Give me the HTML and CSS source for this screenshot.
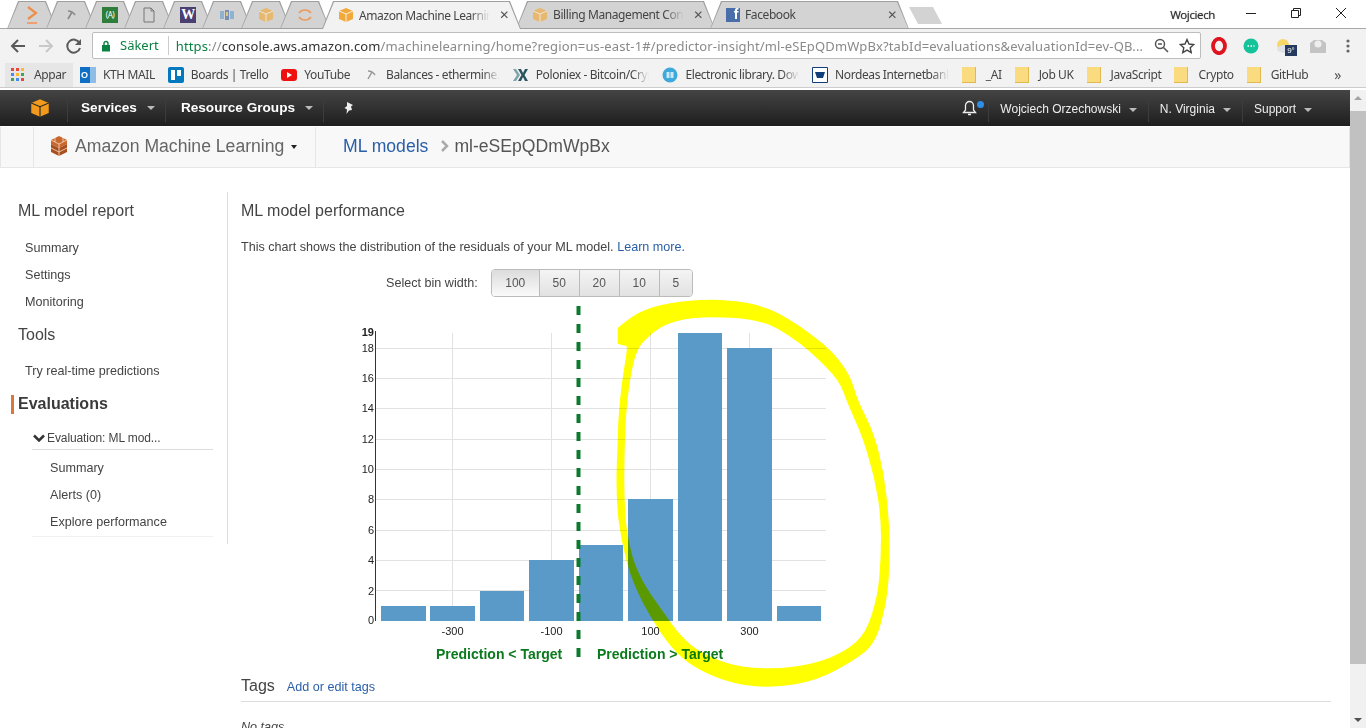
FILE: index.html
```html
<!DOCTYPE html>
<html lang="en">
    <head>
        <meta charset="UTF-8">
        <meta name="viewport" content="width=device-width, initial-scale=1.0">
        <title>Amazon Machine Learning</title>
        <link rel="stylesheet" href="styles.css">
    </head>

    <body>
        <!-- browser tabs -->
        <div class="tabstrip">
            <div class="tab tab-small first">
                <svg width="16" height="22" viewBox="0 0 16 22"><path d="M4 3l8 6-8 6" fill="none" stroke="#ee8e4a" stroke-width="2.2"/><path d="M3 19h10" stroke="#f0a070" stroke-width="2"/></svg>
            </div>
            <div class="tab tab-small">
                <svg width="14" height="14" viewBox="0 0 14 14"><path d="M4 3c3 0 5 1 7 4M8 4l-4 7" fill="none" stroke="#888" stroke-width="1.6"/></svg>
            </div>
            <div class="tab tab-small">
                <span class="fav fav-green">(A)</span>
            </div>
            <div class="tab tab-small">
                <svg width="14" height="16" viewBox="0 0 14 16"><path d="M2 1h7l3 3v11H2zM9 1v3h3" fill="none" stroke="#777"/></svg>
            </div>
            <div class="tab tab-small">
                <span class="fav fav-purple">W</span>
            </div>
            <div class="tab tab-small">
                <svg width="16" height="14" viewBox="0 0 16 14"><path d="M1 3h4v8H1zM11 3h4v8h-4z" fill="#8fb2cf"/><path d="M6 2h4v10H6z" fill="#7a8fb0"/><path d="M7 4h2v4H7z" fill="#d9c98a"/></svg>
            </div>
            <div class="tab tab-small">
                <svg class="faded" width="16" height="16" viewBox="0 0 16 16"><use href="#cube"/></svg>
            </div>
            <div class="tab tab-small">
                <svg width="16" height="16" viewBox="0 0 16 16"><path d="M2 6c3-4 9-4 12 0M2 10c3 4 9 4 12 0" fill="none" stroke="#ee9a5a" stroke-width="1.6"/></svg>
            </div>
            <div class="tab tab-big active">
                <svg width="16" height="16" viewBox="0 0 16 16"><use href="#cube"/></svg>
                <span class="tab-title">Amazon Machine Learning</span>
                <span class="tab-close">&#10005;</span>
            </div>
            <div class="tab tab-big">
                <svg class="faded" width="16" height="16" viewBox="0 0 16 16"><use href="#cube"/></svg>
                <span class="tab-title">Billing Management Console</span>
                <span class="tab-close">&#10005;</span>
            </div>
            <div class="tab tab-big">
                <span class="fav fav-fb">f</span>
                <span class="tab-title">Facebook</span>
                <span class="tab-close">&#10005;</span>
            </div>
            <div class="newtab"></div>
            <span class="win-user">Wojciech</span>
            <div class="win-controls">
                <svg width="12" height="12" viewBox="0 0 12 12"><path d="M1 6.500h10" stroke="#222"/></svg>
                <svg width="12" height="12" viewBox="0 0 12 12"><path d="M1.500 3.500h7v7h-7zM3.500 3.500v-2h7v7h-2" fill="none" stroke="#222"/></svg>
                <svg width="12" height="12" viewBox="0 0 12 12"><path d="M1 1l10 10M11 1L1 11" stroke="#222"/></svg>
            </div>
        </div>

        <!-- shared cube shape -->
        <svg class="defs" width="0" height="0">
            <symbol id="cube" viewBox="0 0 16 16">
                <path d="M1 4l7-3 7 3v8l-7 3-7-3z" fill="#f2a93b"/>
                <path d="M1 4l7 3 7-3" fill="none" stroke="#fff" stroke-width=".8"/>
                <path d="M8 7v8" stroke="#fff" stroke-width=".8"/>
            </symbol>
        </svg>

        <!-- address bar -->
        <div class="toolbar">
            <div class="nav-buttons">
                <svg width="18" height="18" viewBox="0 0 18 18"><path d="M16 9H3M9 3L3 9l6 6" fill="none" stroke="#5a5a5a" stroke-width="2"/></svg>
                <svg width="18" height="18" viewBox="0 0 18 18"><path d="M2 9h13M9 3l6 6-6 6" fill="none" stroke="#c8c8c8" stroke-width="2"/></svg>
                <svg width="18" height="18" viewBox="0 0 18 18"><path d="M14.500 6A6.500 6.500 0 1 0 15 11" fill="none" stroke="#5a5a5a" stroke-width="2"/><path d="M16 2v6h-6z" fill="#5a5a5a"/></svg>
            </div>
            <div class="address">
                <svg class="addr-lock" width="10" height="12" viewBox="0 0 10 12"><path d="M1 5h8v6.500H1z" fill="#0b8043"/><path d="M3 5V3.500a2 2 0 0 1 4 0V5" fill="none" stroke="#0b8043" stroke-width="1.400"/></svg>
                <span class="secure">Säkert</span>
                <span class="url"><span class="url-green">https</span>://<span class="url-dark">console.aws.amazon.com</span>/machinelearning/home?region=us-east-1#/predictor-insight/ml-eSEpQDmWpBx?tabId=evaluations&amp;evaluationId=ev-QB...</span>
                <svg class="addr-zoom" width="15" height="15" viewBox="0 0 15 15"><circle cx="6" cy="6" r="4.500" fill="none" stroke="#555" stroke-width="1.500"/><path d="M9.500 9.500L14 14M4 6h4" stroke="#555" stroke-width="1.500"/></svg>
                <svg class="addr-star" width="16" height="16" viewBox="0 0 16 16"><path d="M8 1.500l2 4.500 4.800.5-3.600 3.200 1 4.800L8 12.100l-4.200 2.400 1-4.800L1.200 6.500 6 6z" fill="none" stroke="#444" stroke-width="1.400"/></svg>
            </div>
            <div class="extensions">
                <svg width="18" height="18" viewBox="0 0 18 18"><ellipse cx="9" cy="9" rx="6" ry="7.200" fill="none" stroke="#e0141e" stroke-width="3.800"/></svg>
                <svg width="16" height="16" viewBox="0 0 16 16"><circle cx="8" cy="8" r="7.500" fill="#15c39a"/><path d="M4.500 8h7" stroke="#fff" stroke-dasharray="1.500 1.500" stroke-width="1.500"/></svg>
                <span class="weather">
                    <svg width="20" height="16" viewBox="0 0 20 16"><circle cx="9" cy="7" r="6" fill="#f7d768"/><ellipse cx="11" cy="11" rx="8" ry="4" fill="#dfe3e8"/></svg>
                    <span class="weather-badge">9°</span>
                </span>
                <svg width="18" height="16" viewBox="0 0 18 16"><path d="M1 5l4-3h8l4 3v10H1z" fill="#c4c4c4"/><circle cx="9" cy="6" r="3.500" fill="#eee"/></svg>
                <svg class="menu-dots" width="4" height="14" viewBox="0 0 4 14"><circle cx="2" cy="2" r="1.600"/><circle cx="2" cy="7" r="1.600"/><circle cx="2" cy="12" r="1.600"/></svg>
            </div>
        </div>

        <!-- bookmarks -->
        <div class="bookmarks">
            <div class="bm bm-apps">
                <svg width="14" height="14" viewBox="0 0 14 14"><g><path d="M0 0h3v3H0z" fill="#e8453c"/><path d="M5 0h3v3H5z" fill="#e8453c"/><path d="M10 0h3v3h-3z" fill="#f9bb2d"/><path d="M0 5h3v3H0z" fill="#4a8af4"/><path d="M5 5h3v3H5z" fill="#f9bb2d"/><path d="M10 5h3v3h-3z" fill="#3aa757"/><path d="M0 10h3v3H0z" fill="#3aa757"/><path d="M5 10h3v3H5z" fill="#4a8af4"/><path d="M10 10h3v3h-3z" fill="#e8453c"/></g></svg>
                <span>Appar</span>
            </div>
            <div class="bm">
                <span class="fav fav-outlook">O</span>
                <span>KTH MAIL</span>
            </div>
            <div class="bm">
                <svg width="16" height="16" viewBox="0 0 16 16"><rect width="16" height="16" rx="2" fill="#0079bf"/><path d="M3 3h4v10H3zM9 3h4v6H9z" fill="#fff"/></svg>
                <span>Boards | Trello</span>
            </div>
            <div class="bm">
                <svg width="16" height="12" viewBox="0 0 16 12"><rect width="16" height="12" rx="3" fill="#ee0f0f"/><path d="M6 3l5 3-5 3z" fill="#fff"/></svg>
                <span>YouTube</span>
            </div>
            <div class="bm">
                <svg width="16" height="14" viewBox="0 0 14 14"><path d="M4 3c3 0 5 1 7 4M8 4l-4 7" fill="none" stroke="#999" stroke-width="1.500"/></svg>
                <span class="bm-cut">Balances - ethermine.org</span>
            </div>
            <div class="bm">
                <svg width="16" height="14" viewBox="0 0 16 14"><path d="M0 1h3l4 6-4 6H0l4-6z" fill="#7fa3ad"/><path d="M5 1h3l2 4 2-4h3l-3.500 6 3.500 6h-3l-2-4-2 4H5l3.500-6z" fill="#27565f"/></svg>
                <span class="bm-cut">Poloniex - Bitcoin/Crypto</span>
            </div>
            <div class="bm">
                <svg width="16" height="16" viewBox="0 0 16 16"><circle cx="8" cy="8" r="7.500" fill="#3fa9dc"/><path d="M4.500 5h3v6h-3zM8.500 5h3v6h-3z" fill="#cde9f6"/></svg>
                <span class="bm-cut">Electronic library. Download</span>
            </div>
            <div class="bm">
                <svg width="16" height="16" viewBox="0 0 16 16"><path d="M.5.500h15v15H.500z" fill="#fff" stroke="#0f3f7a"/><path d="M3 5h10l-2 6H5z" fill="#0f3f7a"/></svg>
                <span class="bm-cut">Nordeas Internetbank</span>
            </div>
            <div class="bm"><i class="folder"></i><span>_AI</span></div>
            <div class="bm"><i class="folder"></i><span>Job UK</span></div>
            <div class="bm"><i class="folder"></i><span>JavaScript</span></div>
            <div class="bm"><i class="folder"></i><span>Crypto</span></div>
            <div class="bm"><i class="folder"></i><span>GitHub</span></div>
            <span class="bm-more">»</span>
        </div>

        <div class="viewport">
            <div class="page">
                <!-- console header -->
                <header class="aws-nav">
                    <div class="aws-logo">
                        <svg width="20" height="20" viewBox="0 0 16 16"><path d="M1 4l7-3 7 3v8l-7 3-7-3z" fill="#f29a1c"/><path d="M1 4l7 3 7-3" fill="none" stroke="#2a2a2a" stroke-width=".9"/><path d="M8 7v8" stroke="#2a2a2a" stroke-width=".9"/></svg>
                    </div>
                    <div class="aws-item aws-bold">Services <i class="caret"></i></div>
                    <div class="aws-item aws-bold aws-groups">Resource Groups <i class="caret"></i></div>
                    <div class="aws-item aws-pin">
                        <svg width="12" height="14" viewBox="0 0 12 14"><path d="M4 1l6 3-2 1.500 1 3.500-3 .5L3.500 13 4 8.500 1.500 7 4 5z" fill="#eee"/></svg>
                    </div>
                    <div class="aws-right">
                        <div class="aws-item aws-bell">
                            <svg width="15" height="16" viewBox="0 0 15 16"><path d="M7.500 1.500a4 4 0 0 1 4 4V10l2 2.500h-12l2-2.500V5.500a4 4 0 0 1 4-4zM6 14.500h3" fill="none" stroke="#eee" stroke-width="1.300"/></svg>
                            <i class="bell-dot"></i>
                        </div>
                        <div class="aws-item">Wojciech Orzechowski <i class="caret"></i></div>
                        <div class="aws-item">N. Virginia <i class="caret"></i></div>
                        <div class="aws-item">Support <i class="caret"></i></div>
                    </div>
                </header>

                <!-- breadcrumb row -->
                <div class="subbar">
                    <div class="sub-service">
                        <svg width="18" height="22" viewBox="0 0 18 22"><path d="M9 1l8 4v4l-8 4-8-4V5z" fill="#c9682c"/><path d="M1 9l8 4 8-4v8l-8 4-8-4z" fill="#a9501f"/><path d="M1 5l8 4 8-4M1 13l8 4 8-4M9 9v12M5 3v4M13 3v4" fill="none" stroke="#f5ddcb" stroke-width=".8"/></svg>
                        <span>Amazon Machine Learning</span>
                        <i class="caret caret-dark"></i>
                    </div>
                    <div class="crumbs">
                        <a class="crumb-link">ML models</a>
                        <svg width="8" height="12" viewBox="0 0 8 12"><path d="M1 1l5 5-5 5" fill="none" stroke="#aaa" stroke-width="2.500"/></svg>
                        <span>ml-eSEpQDmWpBx</span>
                    </div>
                </div>

                <div class="content">
                    <aside class="sidebar">
                        <h4 class="side-title">ML model report</h4>
                        <ul class="side-list">
                            <li>Summary</li>
                            <li>Settings</li>
                            <li>Monitoring</li>
                        </ul>
                        <h4 class="side-title side-tools">Tools</h4>
                        <ul class="side-list side-list-tools">
                            <li>Try real-time predictions</li>
                        </ul>
                        <h4 class="side-title side-active">Evaluations</h4>
                        <div class="eval-head">
                            <svg width="12" height="8" viewBox="0 0 12 8"><path d="M1 1.500l5 5 5-5" fill="none" stroke="#333" stroke-width="2.500"/></svg>
                            <span>Evaluation: ML mod...</span>
                        </div>
                        <ul class="eval-list">
                            <li>Summary</li>
                            <li>Alerts (0)</li>
                            <li>Explore performance</li>
                        </ul>
                    </aside>

                    <main class="report">
                        <h4 class="report-title">ML model performance</h4>
                        <p class="report-text">This chart shows the distribution of the residuals of your ML model. <a class="link">Learn more.</a></p>

                        <div class="bins">
                            <span class="bins-label">Select bin width:</span>
                            <div class="bin-group">
                                <button class="bin bin-on">100</button>
                                <button class="bin">50</button>
                                <button class="bin">20</button>
                                <button class="bin">10</button>
                                <button class="bin">5</button>
                            </div>
                        </div>

                        <div class="chart">
                            <!-- viewBox is in page coordinates so values stay easy to read -->
                            <svg class="chart-svg" width="500" height="364" viewBox="350 301 500 364">
                                <g class="grid">
                                    <path d="M375 590.500h451M375 560.500h451M375 530.500h451M375 499.500h451M375 469.500h451M375 439.500h451M375 408.500h451M375 378.500h451M375 348.500h451"/>
                                    <path d="M452.500 333v288M551.500 333v288M650.500 333v288M749.500 333v288"/>
                                </g>
                                <path class="axis" d="M375.500 331v290"/>
                                <g class="bars">
                                    <rect x="381" y="606" width="45" height="15"/>
                                    <rect x="430" y="606" width="45" height="15"/>
                                    <rect x="480" y="591" width="44" height="30"/>
                                    <rect x="529" y="560" width="45" height="61"/>
                                    <rect x="579" y="545" width="44" height="76"/>
                                    <rect x="628" y="499" width="45" height="122"/>
                                    <rect x="678" y="333" width="44" height="288"/>
                                    <rect x="727" y="348" width="45" height="273"/>
                                    <rect x="777" y="606" width="44" height="15"/>
                                </g>
                                <g class="ticks">
                                    <text x="374" y="336" class="tick-bold">19</text>
                                    <text x="374" y="352">18</text>
                                    <text x="374" y="382">16</text>
                                    <text x="374" y="412">14</text>
                                    <text x="374" y="443">12</text>
                                    <text x="374" y="473">10</text>
                                    <text x="374" y="503">8</text>
                                    <text x="374" y="534">6</text>
                                    <text x="374" y="564">4</text>
                                    <text x="374" y="595">2</text>
                                    <text x="374" y="624">0</text>
                                </g>
                                <g class="xticks">
                                    <text x="452.500" y="635">-300</text>
                                    <text x="551.500" y="635">-100</text>
                                    <text x="650.500" y="635">100</text>
                                    <text x="749.500" y="635">300</text>
                                </g>
                                <path class="zero-line" d="M578.500 306V657"/>
                                <text class="side-label" x="436" y="659">Prediction &lt; Target</text>
                                <text class="side-label" x="597" y="659">Prediction &gt; Target</text>
                            </svg>
                            <!-- highlighter scribble over the chart -->
                            <svg class="scribble" width="300" height="400" viewBox="0 0 900 1200">
                                <path fill-rule="evenodd" d="M55 160L55 115Q100 75 140 60Q180 45 240 37Q300 30 360 32Q420 35 460 45Q500 55 530 70Q560 85 600 112Q640 140 670 165Q700 190 725 225Q750 260 760 295Q770 330 795 380Q820 430 835 490Q850 550 857 615Q865 680 866 740Q868 800 864 865Q860 930 842 995Q825 1060 792 1085Q760 1110 705 1140Q650 1170 585 1181Q520 1192 460 1186Q400 1180 350 1160Q300 1140 265 1115Q230 1090 197 1045Q165 1000 132 940Q100 880 82 815Q65 750 57 685Q50 620 52 535Q55 450 57 395Q60 340 67 285Q75 230 80 200Q85 170 80 165L75 165Z M160 125Q130 150 120 165Q110 180 102 205Q95 230 86 285Q78 340 75 395Q72 450 71 545Q70 640 77 705Q85 770 102 820Q120 870 155 920Q190 970 215 1005Q240 1040 270 1065Q300 1090 350 1110Q400 1130 460 1135Q520 1140 580 1132Q640 1125 690 1105Q740 1085 770 1057Q800 1030 817 975Q835 920 840 860Q845 800 845 740Q845 680 835 620Q825 560 807 500Q790 440 767 390Q745 340 732 305Q720 270 680 230Q640 190 605 162Q570 135 535 115Q500 95 450 87Q400 80 340 80Q280 80 235 90Q190 100 160 125Z"/>
                            </svg>
                        </div>

                        <div class="tags-head">
                            <h4 class="report-title">Tags</h4>
                            <a class="link">Add or edit tags</a>
                        </div>
                        <p class="no-tags">No tags</p>
                    </main>
                </div>
            </div>

            <div class="scrollbar">
                <i class="arrow-up"></i>
                <div class="thumb"></div>
                <i class="arrow-down"></i>
            </div>
        </div>
    </body>
</html>
```

FILE: styles.css
```css
* {
    box-sizing: border-box;
}

html,
body {
    height: 728px;
    overflow: hidden;
}

body {
    margin: 0;
    display: flex;
    flex-direction: column;
    font-family: "Liberation Sans", Arial, sans-serif;
    background-color: #fff;
    color: #444;
}

.defs {
    position: absolute;
}

/* tabs */
.tabstrip {
    display: flex;
    align-items: flex-end;
    height: 29px;
    flex: none;
    padding-left: 7px;
    border-bottom: 1px solid #a9a9a9;
    font-family: "Noto Sans", sans-serif;
    font-size: 12px;
    letter-spacing: -.4px;
}

.tab {
    position: relative;
    display: flex;
    align-items: center;
    height: 28px;
    margin-bottom: -1px;
    padding-bottom: 1px;
    flex: none;
    color: #444;
}

.tab::before,
.tab::after {
    content: "";
    position: absolute;
    clip-path: polygon(0 100%, 11px 0, calc(100% - 11px) 0, 100% 100%);
}

.tab::before {
    inset: 0;
    background-color: #9f9f9f;
}

.tab::after {
    top: 1px;
    right: 1px;
    bottom: 1px;
    left: 1px;
    background-color: #d3d3d3;
}

.tab > * {
    position: relative;
    z-index: 1;
}

.tab-small {
    width: 50px;
    margin-right: -11px;
    justify-content: center;
}

.tab-big {
    width: 199px;
    margin-right: -5px;
    padding-left: 16px;
    padding-right: 12px;
    gap: 5px;
}

.tab-small.first {
    padding-left: 0;
}

.tab.active {
    z-index: 2;
    margin-left: 3px;
    padding-bottom: 0;
}

.tab.active::after {
    bottom: 0;
    background-color: #f2f2f2;
}

.tab-title {
    flex: 1;
    min-width: 0;
    overflow: hidden;
    white-space: nowrap;
    -webkit-mask-image: linear-gradient(to right, #000 85%, transparent);
    mask-image: linear-gradient(to right, #000 85%, transparent);
}

.tab-close {
    flex: none;
    margin-left: 4px;
    font-size: 12px;
    color: #555;
    font-family: "DejaVu Sans", sans-serif;
}

.faded {
    opacity: .65;
}

.fav {
    display: flex;
    align-items: center;
    justify-content: center;
    width: 16px;
    height: 16px;
    flex: none;
    color: #fff;
}

.fav-green {
    background-color: #2f7d3a;
    font-size: 8px;
}

.fav-purple {
    background-color: #4b3f72;
    font-family: "Liberation Serif", serif;
    font-size: 14px;
    font-weight: bold;
}

.fav-fb {
    width: 14px;
    height: 14px;
    background-color: #4a6ea9;
    font-family: "Liberation Sans", sans-serif;
    font-size: 14px;
    font-weight: bold;
    align-items: flex-end;
    justify-content: flex-end;
    padding-right: 2px;
}

.fav-outlook {
    justify-content: flex-start;
    padding-left: 1px;
    background: linear-gradient(to right, #0f6fc6 60%, #8fbde6 60%);
    font-family: "Liberation Sans", sans-serif;
    font-size: 9px;
    font-weight: bold;
    letter-spacing: 0;
}

.newtab {
    width: 33px;
    height: 17px;
    margin: 0 0 4px 5px;
    background-color: #d3d3d3;
    clip-path: polygon(0 0, 24px 0, 100% 100%, 9px 100%);
}

.win-user {
    margin-left: auto;
    margin-bottom: 6px;
    color: #333;
    font-size: 11.5px;
    text-shadow: 0 0 1px #888;
}

.win-controls {
    display: flex;
    gap: 33px;
    margin: 0 19px 9px 30px;
}

/* address bar */
.toolbar {
    display: flex;
    align-items: center;
    height: 33px;
    flex: none;
    background-color: #f2f2f2;
    padding-left: 9px;
}

.nav-buttons {
    display: flex;
    gap: 10px;
    width: 83px;
    flex: none;
}

.address {
    display: flex;
    align-items: center;
    width: 1109px;
    height: 27px;
    flex: none;
    padding: 0 5px 0 8px;
    background-color: #fff;
    border: 1px solid #bdbdbd;
    border-radius: 2px;
    font-family: "Noto Sans", sans-serif;
    font-size: 13px;
    color: #8a8a8a;
}

.addr-lock {
    flex: none;
}

.secure {
    flex: none;
    margin-left: 9px;
    padding-right: 9px;
    border-right: 1px solid #ccc;
    color: #0b8043;
    line-height: 19px;
}

.url {
    margin-left: 7px;
    white-space: nowrap;
    letter-spacing: .13px;
}

.url-green {
    color: #0b8043;
}

.url-dark {
    color: #333;
}

.addr-zoom {
    flex: none;
    margin-left: auto;
}

.addr-star {
    flex: none;
    margin-left: 10px;
}

.extensions {
    display: flex;
    align-items: center;
    gap: 15px;
    margin-left: 9px;
    flex: none;
}

.weather {
    position: relative;
    display: block;
    width: 20px;
    height: 16px;
}

.weather-badge {
    position: absolute;
    top: 7px;
    left: 11px;
    width: 12px;
    height: 11px;
    background-color: #253a5e;
    color: #fff;
    font-size: 8px;
    line-height: 11px;
    text-align: center;
}

.menu-dots {
    fill: #666;
    margin-left: 4px;
}

/* bookmarks */
.bookmarks {
    display: flex;
    align-items: center;
    height: 26px;
    flex: none;
    padding-left: 5px;
    gap: 1px;
    background-color: #f2f2f2;
    border-bottom: 1px solid #ccc;
    font-family: "Noto Sans", sans-serif;
    font-size: 12px;
    letter-spacing: -.4px;
    color: #444;
}

.bm {
    display: flex;
    align-items: center;
    gap: 7px;
    height: 24px;
    padding: 0 6px;
    white-space: nowrap;
    flex: none;
}

.bm-apps {
    width: 68px;
    padding: 0 5px 0 6px;
    gap: 9px;
    background-color: #e6e6e6;
}

.bm-cut {
    display: block;
    width: 113.7px;
    overflow: hidden;
    -webkit-mask-image: linear-gradient(to right, #000 85%, transparent);
    mask-image: linear-gradient(to right, #000 85%, transparent);
}

.folder {
    display: block;
    width: 14px;
    height: 16px;
    margin-right: 3px;
    background-color: #fbdb7f;
    border-right: 1px solid #e0b94f;
    border-bottom: 1px solid #e0b94f;
}

.bm-more {
    margin-left: 19px;
    font-size: 14px;
    color: #555;
}

/* page + scrollbar */
.viewport {
    display: flex;
    flex: 1;
    min-height: 0;
    padding-top: 2px;
}

.page {
    width: 1350px;
    flex: none;
    overflow: hidden;
}

.scrollbar {
    display: flex;
    flex-direction: column;
    flex: 1;
    align-items: center;
    background-color: #f1f1f1;
}

.thumb {
    width: 100%;
    height: 553px;
    margin-top: 11px;
    background-color: #c1c1c1;
}

.arrow-up,
.arrow-down {
    display: block;
    width: 0;
    height: 0;
    border-left: 4px solid transparent;
    border-right: 4px solid transparent;
}

.arrow-up {
    margin-top: 6px;
    border-bottom: 4px solid #a3a3a3;
}

.arrow-down {
    margin-top: auto;
    margin-bottom: 6px;
    border-top: 4px solid #505050;
}

/* console header */
.aws-nav {
    display: flex;
    align-items: stretch;
    height: 36px;
    background: linear-gradient(#444, #1e1e1e);
    color: #eee;
    font-size: 12px;
}

.aws-logo {
    display: flex;
    align-items: center;
    width: 67px;
    padding-left: 30px;
}

.aws-item {
    display: flex;
    align-items: center;
    white-space: nowrap;
    padding: 1px 11px 0;
    border-left: 1px solid #3c3c3c;
    margin: 4px 0;
    gap: 8px;
}

.aws-bold {
    font-size: 13.6px;
    font-weight: bold;
    padding: 0 10px 2px 13px;
    gap: 10px;
    color: #fff;
}

.aws-groups {
    padding-left: 15px;
}

.aws-pin {
    padding: 0 19px;
}

.aws-right {
    display: flex;
    margin-left: auto;
    padding-right: 27px;
}

.aws-right .aws-item:first-child {
    border-left: none;
}

.aws-bell {
    position: relative;
    width: 28px;
    padding: 0 0 0 2px;
}

.bell-dot {
    position: absolute;
    top: 7px;
    left: 17px;
    width: 7px;
    height: 7px;
    border-radius: 50%;
    background-color: #2f8fe6;
}

.caret {
    display: block;
    width: 0;
    height: 0;
    margin-top: 2px;
    border-left: 4px solid transparent;
    border-right: 4px solid transparent;
    border-top: 4px solid #bbb;
}

.caret-dark {
    border-left-width: 3px;
    border-right-width: 3px;
    border-top-color: #222;
}

/* breadcrumb row */
.subbar {
    display: flex;
    align-items: center;
    height: 41px;
    margin-top: 1px;
    background-color: #f8f8f8;
    border: 1px solid #e6e6e6;
    border-top: none;
    font-size: 17.6px;
    color: #555;
}

.sub-service {
    display: flex;
    align-items: center;
    height: 100%;
    width: 283px;
    margin-left: 32px;
    padding-left: 16px;
    padding-bottom: 2px;
    gap: 7px;
    border-left: 1px solid #e6e6e6;
    border-right: 1px solid #e6e6e6;
    color: #666;
    white-space: nowrap;
}

.crumbs {
    display: flex;
    align-items: center;
    gap: 5px;
    padding-left: 27px;
    padding-bottom: 2px;
    white-space: nowrap;
}

.crumb-link {
    color: #2a5fa8;
    margin-right: 8px;
}

/* sidebar + report */
.content {
    display: flex;
    align-items: flex-start;
    padding-top: 24px;
}

.sidebar {
    width: 228px;
    height: 352px;
    flex: none;
    padding-left: 18px;
    border-right: 1px solid #ddd;
    font-size: 12.6px;
}

.side-title {
    margin: 0;
    font-size: 16px;
    font-weight: normal;
    line-height: 20px;
    padding-top: 9px;
}

.side-active {
    position: relative;
    font-weight: bold;
    color: #3a3a3a;
}

.side-active::before {
    content: "";
    position: absolute;
    left: -7px;
    bottom: 0;
    width: 3px;
    height: 19px;
    background-color: #d9773c;
}

.side-list,
.eval-list {
    list-style: none;
    margin: 0;
    padding: 0;
}

.side-list {
    padding-left: 7px;
    padding-top: 14px;
}

.side-list-tools {
    padding-top: 13px;
}

.side-list li,
.eval-list li {
    height: 27px;
    line-height: 27px;
    white-space: nowrap;
}

.eval-head {
    display: flex;
    align-items: center;
    gap: 2px;
    height: 24px;
    width: 181px;
    margin: 12px 0 0 14px;
    padding-left: 1px;
    border-bottom: 1px solid #ddd;
    font-size: 12px;
    letter-spacing: -.1px;
}

.eval-list {
    width: 181px;
    margin-left: 14px;
    padding: 5px 0 0 18px;
    border-bottom: 1px solid #f0f0f0;
}

.report {
    flex: 1;
    padding: 9px 19px 0 13px;
    min-width: 0;
}

.report-title {
    margin: 0;
    font-size: 16px;
    font-weight: normal;
    line-height: 20px;
}

.report-text {
    margin: 16px 0 0;
    font-size: 12.6px;
    line-height: 20px;
}

.link {
    color: #2a5fa8;
}

.bins {
    display: flex;
    align-items: center;
    gap: 13px;
    height: 28px;
    margin: 12px 0 0 145px;
    font-size: 12.6px;
}

.bin-group {
    display: flex;
    height: 28px;
    border: 1px solid #bbb;
    border-radius: 4px;
    overflow: hidden;
}

.bin {
    width: 40px;
    padding: 0;
    border: none;
    border-left: 1px solid #bbb;
    background: linear-gradient(#f4f4f4, #e2e2e2);
    font-family: inherit;
    font-size: 12px;
    color: #555;
}

.bin:last-child {
    width: 33px;
}

.bin-on {
    width: 47px;
    border-left: none;
    background: linear-gradient(#dcdcdc, #fafafa);
}

.chart {
    position: relative;
    height: 364px;
    margin-top: 4px;
    margin-left: 109px;
}

.chart-svg {
    display: block;
}

.scribble {
    position: absolute;
    left: 250px;
    top: -11px;
    mix-blend-mode: multiply;
    fill: #ffff00;
    stroke: #ffff00;
    stroke-width: 4;
    stroke-linejoin: round;
}

.grid path {
    fill: none;
    stroke: #e2e2e2;
    stroke-width: 1;
}

.axis {
    stroke: #333;
    stroke-width: 1;
}

.bars rect {
    fill: #5a9ac8;
}

.ticks text {
    font-size: 11px;
    text-anchor: end;
    fill: #222;
}

.ticks .tick-bold {
    font-weight: bold;
}

.xticks text {
    font-size: 11px;
    text-anchor: middle;
    fill: #222;
}

.zero-line {
    stroke: #0b7a2c;
    stroke-width: 4;
    stroke-dasharray: 9 9;
}

.side-label {
    font-size: 14px;
    font-weight: bold;
    fill: #0b7a1e;
}

.tags-head {
    display: flex;
    align-items: baseline;
    gap: 12px;
    height: 37px;
    padding-top: 11px;
    border-bottom: 1px solid #ddd;
    font-size: 12.6px;
}

.no-tags {
    margin: 18px 0 0;
    font-size: 12.6px;
    font-style: italic;
}
```
